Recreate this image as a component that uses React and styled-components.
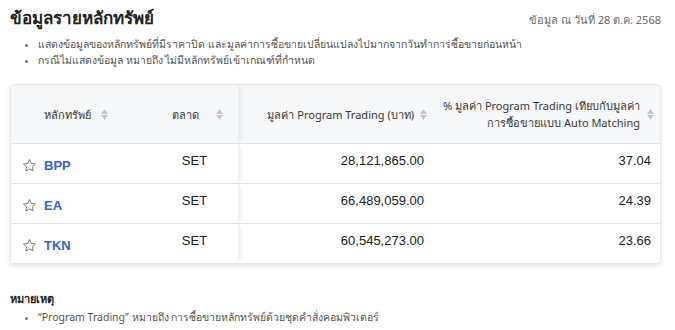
import React from "react";
import styled, { createGlobalStyle } from "styled-components";

const Global = createGlobalStyle`
  html, body { margin: 0; padding: 0; background: #fff; }
  body { font-family: "Noto Sans", "DejaVu Sans", sans-serif; color: #222; }
  * { box-sizing: border-box; }
`;

const Page = styled.div`
  width: 675px;
  padding: 4px 14px 0 10px;
`;

const Header = styled.div`
  display: flex;
  justify-content: space-between;
  align-items: baseline;
`;

const Title = styled.h2`
  margin: 0;
  font-size: 17px;
  font-weight: 700;
  line-height: 28px;
  color: #222;
`;

const DateText = styled.span`
  font-size: 11px;
  color: #6b6b6b;
`;

const Bullets = styled.ul`
  margin: ${(p) => p.$mt || 4}px 0 0;
  padding: 0 0 0 28px;
  font-size: 10.5px;
  line-height: 16px;
  color: #555;
  li::marker { color: #777; font-size: 9px; }
`;

const Card = styled.div`
  margin-top: 16px;
  width: 651px;
  border: 1px solid #e6e8eb;
  border-radius: 4px;
  box-shadow: 0 2px 5px rgba(0, 0, 0, 0.1);
  overflow: hidden;
`;

const Row = styled.div`
  display: grid;
  grid-template-columns: 140px 88px 194px 1fr;
  height: ${(p) => (p.$head ? 58 : 40)}px;
  background: ${(p) => (p.$head ? "#f6f7f9" : "#fff")};
  border-top: ${(p) => (p.$first ? "none" : "1px solid #e3e5e8")};
`;

const Cell = styled.div`
  display: flex;
  align-items: ${(p) => p.$align || "center"};
  justify-content: ${(p) => p.$justify || "flex-start"};
  padding: ${(p) => p.$pad || "0 10px"};
  position: relative;
  ${(p) =>
    p.$sticky &&
    `box-shadow: 5px 0 5px -3px rgba(0,0,0,0.07); z-index: 1; border-right: 1px solid #eceef0;`}
`;

const HeadText = styled.span`
  font-size: 11px;
  line-height: 17px;
  color: #3a3a3a;
  text-align: right;
  white-space: nowrap;
`;

const SortWrap = styled.span`
  display: inline-flex;
  flex-direction: column;
  gap: 1px;
  margin-left: ${(p) => p.$ml || 8}px;
  flex-shrink: 0;
`;

const Sorter = ({ ml }) => (
  <SortWrap $ml={ml}>
    <svg width="7" height="5" viewBox="0 0 7 5">
      <path d="M3.5 0 L7 5 L0 5 Z" fill="#c4c7cc" />
    </svg>
    <svg width="7" height="5" viewBox="0 0 7 5">
      <path d="M0 0 L7 0 L3.5 5 Z" fill="#c4c7cc" />
    </svg>
  </SortWrap>
);

const Symbol = styled.a`
  font-family: "Liberation Sans", Arial, sans-serif;
  font-weight: 700;
  font-size: 13px;
  line-height: 15px;
  color: #3a63d2;
  text-decoration: none;
  margin-left: 7px;
  margin-top: 14px;
`;

const StarBox = styled.span`
  display: inline-flex;
  margin-top: 14px;
`;

const Value = styled.span`
  font-family: "Liberation Sans", Arial, sans-serif;
  font-size: 13px;
  line-height: 15px;
  color: #222;
  margin-top: 9px;
`;

const Star = () => (
  <svg width="15" height="15" viewBox="0 0 24 24" fill="none" stroke="#808080" strokeWidth="1.6" strokeLinejoin="round">
    <path d="M12 2.5l2.9 6.2 6.7.8-5 4.6 1.3 6.7L12 17.5l-5.9 3.3 1.3-6.7-5-4.6 6.7-.8z" />
  </svg>
);

const Note = styled.div`
  margin-top: 27px;
  font-size: 11px;
  font-weight: 700;
  color: #222;
  line-height: 16px;
`;

const rows = [
  { sym: "BPP", mkt: "SET", val: "28,121,865.00", pct: "37.04" },
  { sym: "EA", mkt: "SET", val: "66,489,059.00", pct: "24.39" },
  { sym: "TKN", mkt: "SET", val: "60,545,273.00", pct: "23.66" },
];

export default function App() {
  return (
    <Page>
      <Global />
      <Header>
        <Title>ข้อมูลรายหลักทรัพย์</Title>
        <DateText>ข้อมูล ณ วันที่ 28 ต.ค. 2568</DateText>
      </Header>
      <Bullets>
        <li>แสดงข้อมูลของหลักทรัพย์ที่มีราคาปิด และมูลค่าการซื้อขายเปลี่ยนแปลงไปมากจากวันทำการซื้อขายก่อนหน้า</li>
        <li>กรณีไม่แสดงข้อมูล หมายถึง ไม่มีหลักทรัพย์เข้าเกณฑ์ที่กำหนด</li>
      </Bullets>
      <Card>
        <Row $head $first>
          <Cell $pad="0 0 0 33px">
            <HeadText>หลักทรัพย์</HeadText>
            <Sorter ml={10} />
          </Cell>
          <Cell $sticky $pad="0 0 0 21px">
            <HeadText>ตลาด</HeadText>
            <Sorter ml={17} />
          </Cell>
          <Cell $justify="flex-end" $pad="0 6px 0 10px">
            <HeadText>มูลค่า Program Trading (บาท)</HeadText>
            <Sorter ml={6} />
          </Cell>
          <Cell $justify="flex-end" $pad="0 6px 0 6px">
            <HeadText>
              % มูลค่า Program Trading เทียบกับมูลค่า
              <br />
              การซื้อขายแบบ Auto Matching
            </HeadText>
            <Sorter ml={7} />
          </Cell>
        </Row>
        {rows.map((r) => (
          <Row key={r.sym}>
            <Cell $pad="0 0 0 11px" $align="flex-start">
              <StarBox>
                <Star />
              </StarBox>
              <Symbol href="#">{r.sym}</Symbol>
            </Cell>
            <Cell $sticky $justify="center" $align="flex-start">
              <Value>{r.mkt}</Value>
            </Cell>
            <Cell $justify="flex-end" $align="flex-start" $pad="0 9px 0 10px">
              <Value>{r.val}</Value>
            </Cell>
            <Cell $justify="flex-end" $align="flex-start" $pad="0 9px 0 10px">
              <Value>{r.pct}</Value>
            </Cell>
          </Row>
        ))}
      </Card>
      <Note>หมายเหตุ</Note>
      <Bullets $mt={2}>
        <li>“Program Trading” หมายถึง การซื้อขายหลักทรัพย์ด้วยชุดคำสั่งคอมพิวเตอร์</li>
      </Bullets>
    </Page>
  );
}
